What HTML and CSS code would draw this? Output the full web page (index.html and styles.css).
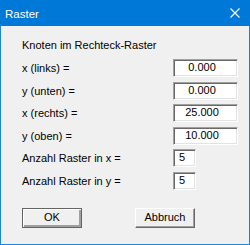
FILE: index.html
```
<!DOCTYPE html>
<html lang="de">
<head>
  <meta charset="UTF-8">
  <title>Raster</title>
  <link rel="stylesheet" href="styles.css">
</head>
<body>

  <div class="dialog">
    <div class="titlebar">
      <span class="title">Raster</span>
      <svg class="close" width="10" height="10" viewBox="0 0 10 10">
        <path d="M0.5 0.5 L9.5 9.5 M9.5 0.5 L0.5 9.5" stroke="#fff" stroke-width="1.2" fill="none"/>
      </svg>
    </div>
    <div class="content">
      <div class="heading">Knoten im Rechteck-Raster</div>
      <div class="rows">
        <div class="row"><span class="label">x (links) =</span><span class="field">0.000</span></div>
        <div class="row"><span class="label">y (unten) =</span><span class="field">0.000</span></div>
        <div class="row"><span class="label">x (rechts) =</span><span class="field">25.000</span></div>
        <div class="row"><span class="label">y (oben) =</span><span class="field">10.000</span></div>
        <div class="row"><span class="label">Anzahl Raster in x =</span><span class="field small">5</span></div>
        <div class="row"><span class="label">Anzahl Raster in y =</span><span class="field small">5</span></div>
      </div>
      <div class="buttons">
        <span class="btn default">OK</span>
        <span class="btn">Abbruch</span>
      </div>
    </div>
  </div>

</body>
</html>
```

FILE: styles.css
```
body{
  margin: 0;
  font-family: "Liberation Sans", Arial, sans-serif;
  font-size: 11px;
  color: #000;
  background: #fff;
}
.dialog{
  box-sizing: border-box;
  width: 250px;
  height: 245px;
  border: 1px solid #1a84d8;
  border-top: 0;
  background-color: #f0f0f0;
}
.titlebar{
  display: flex;
  align-items: center;
  justify-content: space-between;
  height: 26px;
  margin: 0 -1px;
  padding: 0 10px 0 5px;
  background-color: #0078d7;
  color: #fff;
}
.title{
  font-size: 11.5px;
  padding-top: 1px;
}
.content{
  padding: 12px 0 0 21px;
}
.heading{
  height: 14px;
  line-height: 14px;
}
.rows{
  display: flex;
  flex-direction: column;
  gap: 4.6px;
  margin-top: 7px;
}
.row{
  display: flex;
  justify-content: space-between;
  height: 18px;
  line-height: 18px;
  padding-right: 11px;
}
.field{
  box-sizing: border-box;
  width: 65px;
  height: 18px;
  line-height: 14px;
  padding-right: 7px;
  text-align: center;
  background: #fff;
  border: 1px solid;
  border-color: #a0a0a0 #fff #fff #a0a0a0;
  box-shadow: inset 1px 1px 0 #696969, inset -1px -1px 0 #e3e3e3;
}
.field.small{
  width: 23px;
  margin-right: 42px;
  padding: 0 0 0 5px;
  text-align: left;
}
.buttons{
  display: flex;
  gap: 53px;
  margin-top: 18px;
}
.btn{
  box-sizing: border-box;
  width: 60px;
  height: 20px;
  line-height: 16px;
  text-align: center;
  background: #f0f0f0;
  border: 1px solid;
  border-color: #fff #696969 #696969 #fff;
  box-shadow: inset -1px -1px 0 #a0a0a0;
}
.btn.default{
  border-color: #646464;
  box-shadow: inset 1px 1px 0 #fff, inset -2px -2px 0 #a0a0a0;
}
```
